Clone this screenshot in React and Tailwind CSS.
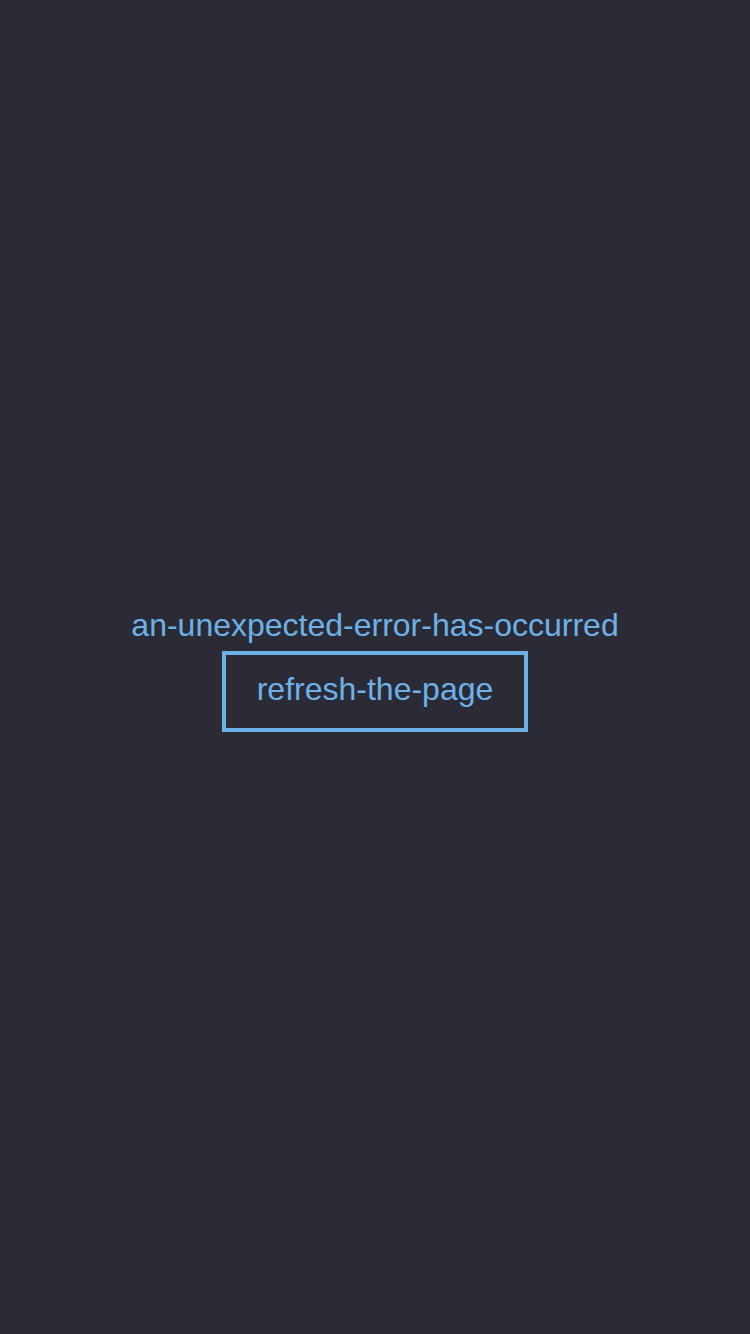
export default function App() {
  return (
    <div className="min-h-[1334px] w-full bg-[#2b2b36] flex flex-col items-center justify-center pt-[4px] font-['Liberation_Sans',Arial,sans-serif] text-[#6cb2e8]">
      <p className="text-[32px] leading-[37px]">an-unexpected-error-has-occurred</p>
      <button className="mt-[7px] border-4 border-[#6cb2e8] px-[31px] pt-[16px] pb-[20px] text-[32px] leading-[37px]">
        refresh-the-page
      </button>
    </div>
  )
}
